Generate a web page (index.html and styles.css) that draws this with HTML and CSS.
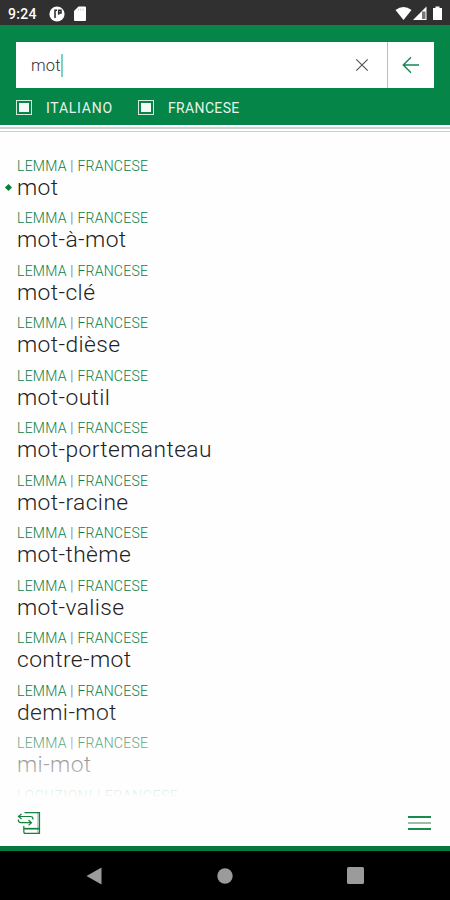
FILE: index.html
```
<!DOCTYPE html>
<html lang="it">
<head>
  <meta charset="UTF-8" />
  <meta name="viewport" content="width=device-width, initial-scale=1.0"/>
  <title>Dizionario Francese</title>
  <link rel="stylesheet" href="styles.css">
</head>
<body>
  <div class="status-bar">
    <span class="clock">9:24</span>
    <svg class="app-icon" width="16" height="16" viewBox="0 0 16 16">
      <circle cx="8" cy="8" r="7.6" fill="#fff"/>
      <path d="M6 3.5v8.5M6 4.3h2M9.7 8.8V4.3h2.3v2.6H9.7" fill="none" stroke="#303030" stroke-width="1.6"/>
    </svg>
    <svg class="sd-icon" width="12" height="15" viewBox="0 0 12 15">
      <path d="M4.5 0.5H11q1 0 1 1V14q0 1-1 1H1q-1 0-1-1V5z" fill="#fff"/>
      <path d="M4.5 2.5v2M6.8 2.5v2M9.1 2.5v2" stroke="#bbb" stroke-width="0.8"/>
    </svg>
    <svg class="signals" width="49" height="16" viewBox="0 0 49 16">
      <path d="M0.5 4Q8.5-2 16.5 4L8.5 14z" fill="#fff"/>
      <path d="M31.5 0.5V14H18z" fill="#fff"/>
      <path d="M27 5.5h3.5V13H27z" fill="#777"/>
      <path d="M38 2h2.5V0.5h4V2H47v12h-9z" fill="#fff"/>
    </svg>
  </div>

  <div class="header">
    <div class="search">
      <div class="search-field">
        <span class="query">mot</span><span class="caret"></span>
        <svg class="clear" width="14" height="14" viewBox="0 0 14 14">
          <path d="M1.3 1.3l11.4 11.4M12.7 1.3L1.3 12.7" stroke="#555" stroke-width="1.2"/>
        </svg>
      </div>
      <div class="back">
        <svg width="18" height="18" viewBox="0 0 18 18">
          <path d="M17 9H1.5M9 1.2L1.3 9L9 16.8" fill="none" stroke="#168653" stroke-width="1.4"/>
        </svg>
      </div>
    </div>
    <div class="filters">
      <span class="check"></span><span class="filter-name italiano">ITALIANO</span>
      <span class="check"></span><span class="filter-name">FRANCESE</span>
    </div>
  </div>
  <div class="stripes"></div>

  <div class="results">
    <div class="item current"><div class="label">LEMMA <i>|</i> FRANCESE</div><div class="word">mot</div></div>
    <div class="item"><div class="label">LEMMA <i>|</i> FRANCESE</div><div class="word">mot-à-mot</div></div>
    <div class="item"><div class="label">LEMMA <i>|</i> FRANCESE</div><div class="word">mot-clé</div></div>
    <div class="item"><div class="label">LEMMA <i>|</i> FRANCESE</div><div class="word">mot-dièse</div></div>
    <div class="item"><div class="label">LEMMA <i>|</i> FRANCESE</div><div class="word">mot-outil</div></div>
    <div class="item"><div class="label">LEMMA <i>|</i> FRANCESE</div><div class="word">mot-portemanteau</div></div>
    <div class="item"><div class="label">LEMMA <i>|</i> FRANCESE</div><div class="word">mot-racine</div></div>
    <div class="item"><div class="label">LEMMA <i>|</i> FRANCESE</div><div class="word">mot-thème</div></div>
    <div class="item"><div class="label">LEMMA <i>|</i> FRANCESE</div><div class="word">mot-valise</div></div>
    <div class="item"><div class="label">LEMMA <i>|</i> FRANCESE</div><div class="word">contre-mot</div></div>
    <div class="item"><div class="label">LEMMA <i>|</i> FRANCESE</div><div class="word">demi-mot</div></div>
    <div class="item"><div class="label">LEMMA <i>|</i> FRANCESE</div><div class="word">mi-mot</div></div>
    <div class="item last"><div class="label">LOCUZIONI <i>|</i> FRANCESE</div></div>
  </div>

  <div class="toolbar">
    <svg width="24" height="24" viewBox="0 0 24 24" fill="none" stroke="#16803f" stroke-width="1.2">
      <path d="M7.5 1.6h15v20.8H8.5q-1.7 0-1.7-2V15"/>
      <path d="M21 2v15M21 18v4" stroke-width="0.6"/>
      <path d="M6.8 17.7H22" stroke-width="1.7"/>
      <path d="M16 8.5Q16 5.5 13.5 5.5H1.5M4.5 3L1.5 5.5l3 2.5"/>
      <path d="M1.3 8.5q0 3.2 2.5 3.2H14M11.5 9l3 2.7-3 2.7"/>
    </svg>
    <div class="menu"><span></span><span></span><span></span></div>
  </div>

  <div class="nav-bar">
    <svg width="16" height="18" viewBox="0 0 16 18"><path d="M15.5 0.5v17L0.5 9z" fill="#9b9b9b"/></svg>
    <svg width="16" height="16" viewBox="0 0 16 16"><circle cx="8" cy="8" r="7.7" fill="#9b9b9b"/></svg>
    <svg width="17" height="17" viewBox="0 0 17 17"><rect width="17" height="17" rx="1.5" fill="#9b9b9b"/></svg>
  </div>
</body>
</html>
```

FILE: styles.css
```
* {
  box-sizing: border-box;
}

body {
  margin: 0;
  width: 450px;
  height: 900px;
  display: flex;
  flex-direction: column;
  overflow: hidden;
  background: #fefefe;
  font-family: Roboto, "Noto Sans", sans-serif;
}

svg {
  display: block;
  flex: none;
}

.status-bar {
  height: 25px;
  flex: none;
  display: flex;
  align-items: center;
  padding: 2px 6px 0 8px;
  background: #303030;
  color: #fff;
}

.clock {
  width: 41px;
  font-size: 14px;
  font-weight: 500;
  line-height: 16px;
  letter-spacing: 0.3px;
}

.sd-icon {
  margin-left: 9px;
}

.signals {
  margin-left: auto;
}

.header {
  height: 100px;
  flex: none;
  padding: 17px 16px 0;
  background: #058548;
}

.search {
  height: 46px;
  display: flex;
  background: #fff;
}

.search-field {
  flex: 1;
  display: flex;
  align-items: center;
  padding: 0 18px 0 15px;
}

.query {
  font-size: 16.5px;
  font-weight: 300;
  color: #333;
  letter-spacing: 0.2px;
}

.caret {
  width: 2px;
  height: 23px;
  background: #7fcfc4;
}

.clear {
  margin-left: auto;
}

.back {
  width: 47px;
  display: flex;
  align-items: center;
  justify-content: center;
  border-left: 1px solid #a5c9b6;
}

.filters {
  display: flex;
  align-items: center;
  height: 39px;
}

.check {
  width: 16px;
  height: 15px;
  margin-right: 14px;
  border: 1px solid #d5eadd;
  padding: 2px;
  background: #f4faf6 content-box;
}

.filter-name {
  font-size: 14px;
  color: #e6f4eb;
  letter-spacing: 0.35px;
}

.italiano {
  width: 92px;
  letter-spacing: 0.75px;
}

.stripes {
  height: 8px;
  flex: none;
  background: linear-gradient(#fff 0 2px, #ccd3cf 2px 4px, #fff 4px 6px, #c3d5cc 6px 7px, #fff 7px);
}

.results {
  position: relative;
  height: 674px;
  flex: none;
  padding: 23.5px 0 0 17px;
  overflow: hidden;
}

/* fades the end of the list */
.results::after {
  content: "";
  position: absolute;
  left: 0;
  right: 0;
  bottom: 0;
  height: 97px;
  background: linear-gradient(rgba(254, 254, 254, 0), rgba(254, 254, 254, 0.33) 34px, rgba(254, 254, 254, 0.6) 55px, rgba(254, 254, 254, 0.87) 82px, #fefefe 88px);
}

.item {
  height: 52.5px;
}

.last {
  height: 19px;
}

.label {
  height: 19px;
  line-height: 19px;
  font-size: 14px;
  font-weight: 300;
  letter-spacing: 0.25px;
  color: #087f46;
  white-space: nowrap;
}

.last .label {
  letter-spacing: 0.65px;
}

.label i {
  font-style: normal;
  color: #666;
}

.word {
  height: 24px;
  line-height: 24px;
  font-size: 22.8px;
  font-weight: 300;
  letter-spacing: 0.4px;
  color: #222;
  white-space: nowrap;
}

.current {
  position: relative;
}

.current::before {
  content: "";
  position: absolute;
  left: -11px;
  top: 28px;
  width: 5px;
  height: 5px;
  background: #087f35;
  transform: rotate(45deg);
}

.toolbar {
  height: 39px;
  flex: none;
  display: flex;
  justify-content: space-between;
  align-items: center;
  padding: 0 19px 7px 17px;
}

.menu {
  width: 23px;
  display: flex;
  flex-direction: column;
  gap: 4px;
}

.menu span {
  height: 2px;
  background: #168c50;
}

.menu span:nth-child(2) {
  background: #9dbda9;
}

.nav-bar {
  height: 54px;
  flex: none;
  display: flex;
  justify-content: space-between;
  align-items: center;
  padding: 0 86px;
  border-top: 5px solid #057a40;
  background: #000;
}
```
